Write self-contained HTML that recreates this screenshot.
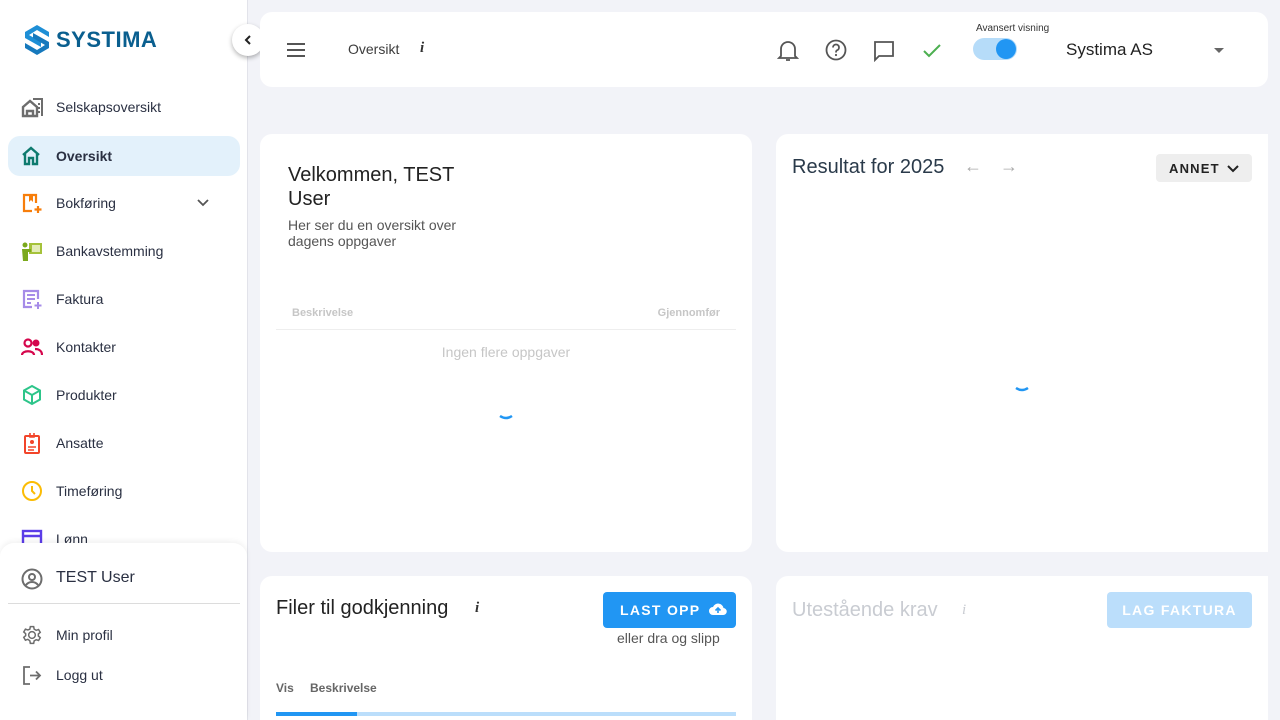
<!DOCTYPE html>
<html style="overflow:hidden;height:720px"><head><meta charset="utf-8"><style>
*{box-sizing:border-box;margin:0;padding:0}
body{width:1280px;height:720px;overflow:hidden;background:#f2f3f8;font-family:"Liberation Sans",sans-serif;color:#2a3042;position:relative}
.side{position:absolute;left:0;top:0;width:248px;height:720px;background:#fff;border-right:1px solid #e2e3ea}
.logo{position:absolute;left:24px;top:24px;display:flex;align-items:center}
.logo span{font-weight:bold;font-size:22px;color:#0a5f8f;margin-left:6px;letter-spacing:0.5px}
.nav{position:absolute;left:8px;width:232px;height:40px;display:flex;align-items:center;font-size:14px;color:#2a3042;border-radius:12px}
.nav svg{position:absolute;left:13px}
.nav .t{position:absolute;left:48px}
.collapse{position:absolute;left:232px;top:24px;width:32px;height:32px;border-radius:50%;background:#fff;box-shadow:0 2px 5px rgba(0,0,0,.3);display:flex;align-items:center;justify-content:center}
.user{position:absolute;left:0;top:543px;width:247px;height:177px;background:#fff;border-radius:14px 14px 0 0;box-shadow:0 -2px 6px rgba(0,0,0,.06)}
.card{position:absolute;background:#fff;border-radius:12px}
.ic{position:absolute}
</style></head><body>
<div class="side">
 <div class="logo"><svg width="26" height="32" viewBox="0 0 26 32"><path d="M13 1 L25 8 L25 13 L13 6 L5 11 L17 18 L17 23 L1 14 L1 8Z" fill="#1e8fd6"/><path d="M13 31 L1 24 L1 19 L13 26 L21 21 L9 14 L9 9 L25 18 L25 24Z" fill="#1679bd"/></svg><span>SYSTIMA</span></div>
 <div class="nav" style="top:87px"><svg width="24" height="22" viewBox="0 0 24 22"><path d="M2 20V11l7-6 7 6v9H2zM6 20v-5h6v5" fill="none" stroke="#6d6d6d" stroke-width="2.4"/><path d="M12 3h9v17" fill="none" stroke="#6d6d6d" stroke-width="2"/><path d="M17 8h2M17 12h2M17 16h2" stroke="#6d6d6d" stroke-width="2"/></svg><span class="t">Selskapsoversikt</span></div>
 <div class="nav" style="top:136px;background:#e3f1fb;font-weight:bold"><svg width="20" height="20" viewBox="0 0 20 20"><path d="M2 9L10 2l8 7M4 8v10h4v-6h4v6h4V8" fill="none" stroke="#0e7a6e" stroke-width="2.4"/></svg><span class="t">Oversikt</span></div>
 <div class="nav" style="top:183px"><svg width="22" height="22" viewBox="0 0 22 22"><path d="M11 19H3V3h12v8" fill="none" stroke="#f77e0b" stroke-width="2.2"/><path d="M8 3v7l2-2 2 2V3" fill="#f77e0b"/><path d="M17 14v7M13.5 17.5h7" stroke="#f77e0b" stroke-width="2.2"/></svg><span class="t">Bokføring</span><svg style="left:188px" width="14" height="10" viewBox="0 0 14 10"><path d="M2 2l5 5 5-5" fill="none" stroke="#555" stroke-width="1.8"/></svg></div>
 <div class="nav" style="top:231px"><svg width="22" height="22" viewBox="0 0 22 22"><rect x="8" y="3" width="13" height="11" fill="#a5c23a"/><rect x="11" y="5" width="8" height="7" fill="#e3ecb8"/><circle cx="4" cy="5" r="2.5" fill="#7ba91c"/><path d="M1 9h9v3H7v9H2z" fill="#7ba91c"/></svg><span class="t">Bankavstemming</span></div>
 <div class="nav" style="top:279px"><svg width="22" height="22" viewBox="0 0 22 22"><path d="M11 19H3V3h14v8" fill="none" stroke="#a68ce8" stroke-width="2.2"/><path d="M6 7h8M6 11h8M6 15h4M17 14v7M13.5 17.5h7" stroke="#a68ce8" stroke-width="2"/></svg><span class="t">Faktura</span></div>
 <div class="nav" style="top:327px"><svg width="22" height="20" viewBox="0 0 22 20"><circle cx="7" cy="6" r="3.5" fill="none" stroke="#d5064c" stroke-width="2.2"/><circle cx="15" cy="6" r="3.5" fill="#d5064c"/><path d="M1 18c0-5 12-5 12 0M14 12c4 0 7 2 7 6" fill="none" stroke="#d5064c" stroke-width="2.2"/></svg><span class="t">Kontakter</span></div>
 <div class="nav" style="top:375px"><svg width="22" height="22" viewBox="0 0 22 22"><path d="M11 2l8 4.5v9L11 20l-8-4.5v-9zM3 6.5l8 4.5 8-4.5M11 11v9" fill="none" stroke="#2dc58a" stroke-width="2"/></svg><span class="t">Produkter</span></div>
 <div class="nav" style="top:423px"><svg width="22" height="22" viewBox="0 0 22 22"><rect x="4" y="4" width="14" height="17" rx="1" fill="none" stroke="#f2452a" stroke-width="2"/><circle cx="11" cy="10" r="2" fill="#f2452a"/><path d="M7 15h8M7 18h6M9 1v4h4V1" stroke="#f2452a" stroke-width="1.6" fill="none"/></svg><span class="t">Ansatte</span></div>
 <div class="nav" style="top:471px"><svg width="22" height="22" viewBox="0 0 22 22"><circle cx="11" cy="11" r="9" fill="none" stroke="#fbbc05" stroke-width="2"/><path d="M11 6v5l3 3" fill="none" stroke="#fbbc05" stroke-width="2"/></svg><span class="t">Timeføring</span></div>
 <div class="nav" style="top:519px"><svg width="22" height="22" viewBox="0 0 22 22"><rect x="2" y="3" width="18" height="16" fill="none" stroke="#5b3ce8" stroke-width="2.4"/><path d="M2 8h18" stroke="#5b3ce8" stroke-width="2.4"/></svg><span class="t">Lønn</span></div>
 <div class="user">
  <svg class="ic" style="left:21px;top:25px" width="22" height="22" viewBox="0 0 22 22"><circle cx="11" cy="11" r="9.5" fill="none" stroke="#6d6d6d" stroke-width="2"/><circle cx="11" cy="9" r="3" fill="none" stroke="#6d6d6d" stroke-width="2"/><path d="M5 17c3-4 9-4 12 0" fill="none" stroke="#6d6d6d" stroke-width="2"/></svg>
  <div style="position:absolute;left:56px;top:26px;font-size:16px">TEST User</div>
  <div style="position:absolute;left:8px;top:60px;width:232px;height:1px;background:#dcdcdc"></div>
  <svg class="ic" style="left:22px;top:82px" width="20" height="20" viewBox="0 0 24 24"><path d="M12 8a4 4 0 1 0 0 8 4 4 0 0 0 0-8zM10 2h4l.6 3 2.4 1.4 2.9-1 2 3.4-2.3 2v2.4l2.3 2-2 3.4-2.9-1-2.4 1.4-.6 3h-4l-.6-3L7 17.2l-2.9 1-2-3.4 2.3-2v-2.4l-2.3-2 2-3.4 2.9 1L9.4 5z" fill="none" stroke="#6d6d6d" stroke-width="1.8"/></svg>
  <div style="position:absolute;left:56px;top:84px;font-size:14px">Min profil</div>
  <svg class="ic" style="left:22px;top:122px" width="20" height="20" viewBox="0 0 20 20"><path d="M8 2H2v17h6M8 10.5h10M14 6.5l4 4-4 4" fill="none" stroke="#6d6d6d" stroke-width="1.8"/></svg>
  <div style="position:absolute;left:56px;top:124px;font-size:14px">Logg ut</div>
 </div>
</div>
<div class="collapse"><svg width="12" height="12" viewBox="0 0 12 12"><path d="M8 2L4 6l4 4" fill="none" stroke="#222" stroke-width="2"/></svg></div>

<div class="card" style="left:260px;top:12px;width:1008px;height:75px">
 <svg class="ic" style="left:26px;top:30px" width="20" height="16" viewBox="0 0 20 16"><path d="M1 2h18M1 8h18M1 14h18" stroke="#555" stroke-width="2"/></svg>
 <div style="position:absolute;left:88px;top:29px;font-size:14px;color:#3c3c3c">Oversikt</div>
 <div style="position:absolute;left:160px;top:28px;font-size:15px;font-style:italic;font-weight:bold;font-family:'Liberation Serif',serif;color:#333">i</div>
 <svg class="ic" style="left:517px;top:26px" width="22" height="24" viewBox="0 0 22 24"><path d="M4 18V11a7 7 0 0 1 14 0v7l2 2H2zM9 22h4" fill="none" stroke="#555" stroke-width="1.8"/></svg>
 <svg class="ic" style="left:565px;top:27px" width="22" height="22" viewBox="0 0 22 22"><circle cx="11" cy="11" r="9.5" fill="none" stroke="#555" stroke-width="1.8"/><path d="M8 8.5a3 3 0 1 1 4 2.8c-1 .4-1 1-1 2.2" fill="none" stroke="#555" stroke-width="1.8"/><circle cx="11" cy="16" r="1.1" fill="#555"/></svg>
 <svg class="ic" style="left:613px;top:28px" width="22" height="22" viewBox="0 0 22 22"><path d="M2 2h18v14H6l-4 4z" fill="none" stroke="#555" stroke-width="1.8"/></svg>
 <svg class="ic" style="left:662px;top:31px" width="20" height="15" viewBox="0 0 20 15"><path d="M2 8l5 5L18 2" fill="none" stroke="#4caf50" stroke-width="2"/></svg>
 <div style="position:absolute;left:716px;top:11px;font-size:10px;color:#333">Avansert visning</div>
 <div style="position:absolute;left:713px;top:26px;width:44px;height:22px;border-radius:11px;background:#b6dcf9"></div>
 <div style="position:absolute;left:736px;top:27px;width:20px;height:20px;border-radius:50%;background:#2196f3"></div>
 <div style="position:absolute;left:806px;top:28px;font-size:17px;color:#222">Systima AS</div>
 <div style="position:absolute;left:954px;top:36px;border-left:5px solid transparent;border-right:5px solid transparent;border-top:5px solid #666"></div>
</div>

<div class="card" style="left:260px;top:134px;width:492px;height:418px">
 <div style="position:absolute;left:28px;top:29px;font-size:20px;line-height:24px;color:#222;width:190px">Velkommen, TEST User</div>
 <div style="position:absolute;left:28px;top:83px;font-size:14px;line-height:16px;color:#555;width:190px">Her ser du en oversikt over dagens oppgaver</div>
 <div style="position:absolute;left:32px;top:173px;font-size:11px;font-weight:bold;color:#c6c6c6">Beskrivelse</div>
 <div style="position:absolute;right:32px;top:173px;font-size:11px;font-weight:bold;color:#c6c6c6">Gjennomfør</div>
 <div style="position:absolute;left:16px;top:195px;width:460px;height:1px;background:#eee"></div>
 <div style="position:absolute;left:0;width:492px;top:210px;text-align:center;font-size:14px;color:#c6c6c6">Ingen flere oppgaver</div>
 <svg class="ic" style="left:238px;top:278px" width="20" height="10"><path d="M2 4q6 4 12 0" fill="none" stroke="#2196f3" stroke-width="2.5"/></svg>
</div>

<div class="card" style="left:776px;top:134px;width:492px;height:418px;border-radius:12px 0 0 12px">
 <div style="position:absolute;left:16px;top:22px;font-size:20px;color:#2a3a4a">Resultat for 2025</div>
 <div style="position:absolute;left:188px;top:22px;font-size:18px;color:#aaa">←</div>
 <div style="position:absolute;left:224px;top:22px;font-size:18px;color:#aaa">→</div>
 <div style="position:absolute;left:380px;top:20px;width:96px;height:28px;background:#eee;border-radius:4px;font-size:13px;font-weight:bold;letter-spacing:1.2px;color:#222;padding:7px 0 0 13px">ANNET <svg width="12" height="9" viewBox="0 0 12 9" style="margin-left:2px"><path d="M1 2l5 5 5-5" fill="none" stroke="#222" stroke-width="2"/></svg></div>
 <svg class="ic" style="left:238px;top:250px" width="20" height="10"><path d="M2 4q6 4 12 0" fill="none" stroke="#2196f3" stroke-width="2.5"/></svg>
</div>

<div class="card" style="left:260px;top:576px;width:492px;height:144px;border-radius:12px 12px 0 0">
 <div style="position:absolute;left:16px;top:21px;font-size:20px;color:#222">Filer til godkjenning</div>
 <div style="position:absolute;left:215px;top:24px;font-size:15px;font-style:italic;font-weight:bold;font-family:'Liberation Serif',serif;color:#333">i</div>
 <div style="position:absolute;left:343px;top:16px;width:133px;height:36px;background:#2196f3;border-radius:4px;color:#fff;font-size:14px;font-weight:bold;letter-spacing:1.3px;padding:10px 0 0 17px">LAST OPP <svg width="18" height="14" viewBox="0 0 18 14" style="margin-left:4px;vertical-align:-1px"><path d="M4 13a4 4 0 0 1 0-8 5.5 5.5 0 0 1 10.5 1A3.5 3.5 0 0 1 14 13z" fill="#fff"/><path d="M9 11V6M6.5 8.5L9 6l2.5 2.5" stroke="#2196f3" stroke-width="1.6" fill="none"/></svg></div>
 <div style="position:absolute;left:357px;top:54px;font-size:14px;color:#555">eller dra og slipp</div>
 <div style="position:absolute;left:16px;top:105px;font-size:12px;font-weight:bold;color:#666">Vis</div>
 <div style="position:absolute;left:50px;top:105px;font-size:12px;font-weight:bold;color:#666">Beskrivelse</div>
 <div style="position:absolute;left:16px;top:136px;width:460px;height:4px;background:#bbdefb"></div>
 <div style="position:absolute;left:16px;top:136px;width:81px;height:4px;background:#2196f3"></div>
</div>

<div class="card" style="left:776px;top:576px;width:492px;height:144px;border-radius:12px 0 0 0">
 <div style="position:absolute;left:16px;top:23px;font-size:20px;color:#c9ccd2">Utestående krav</div>
 <div style="position:absolute;left:186px;top:26px;font-size:15px;font-style:italic;font-family:'Liberation Serif',serif;color:#c9ccd2">i</div>
 <div style="position:absolute;left:331px;top:16px;width:145px;height:36px;background:#bbdefb;border-radius:4px;color:#fff;font-size:14px;font-weight:bold;letter-spacing:1.3px;text-align:center;padding-top:10px">LAG FAKTURA</div>
</div>
</body></html>
